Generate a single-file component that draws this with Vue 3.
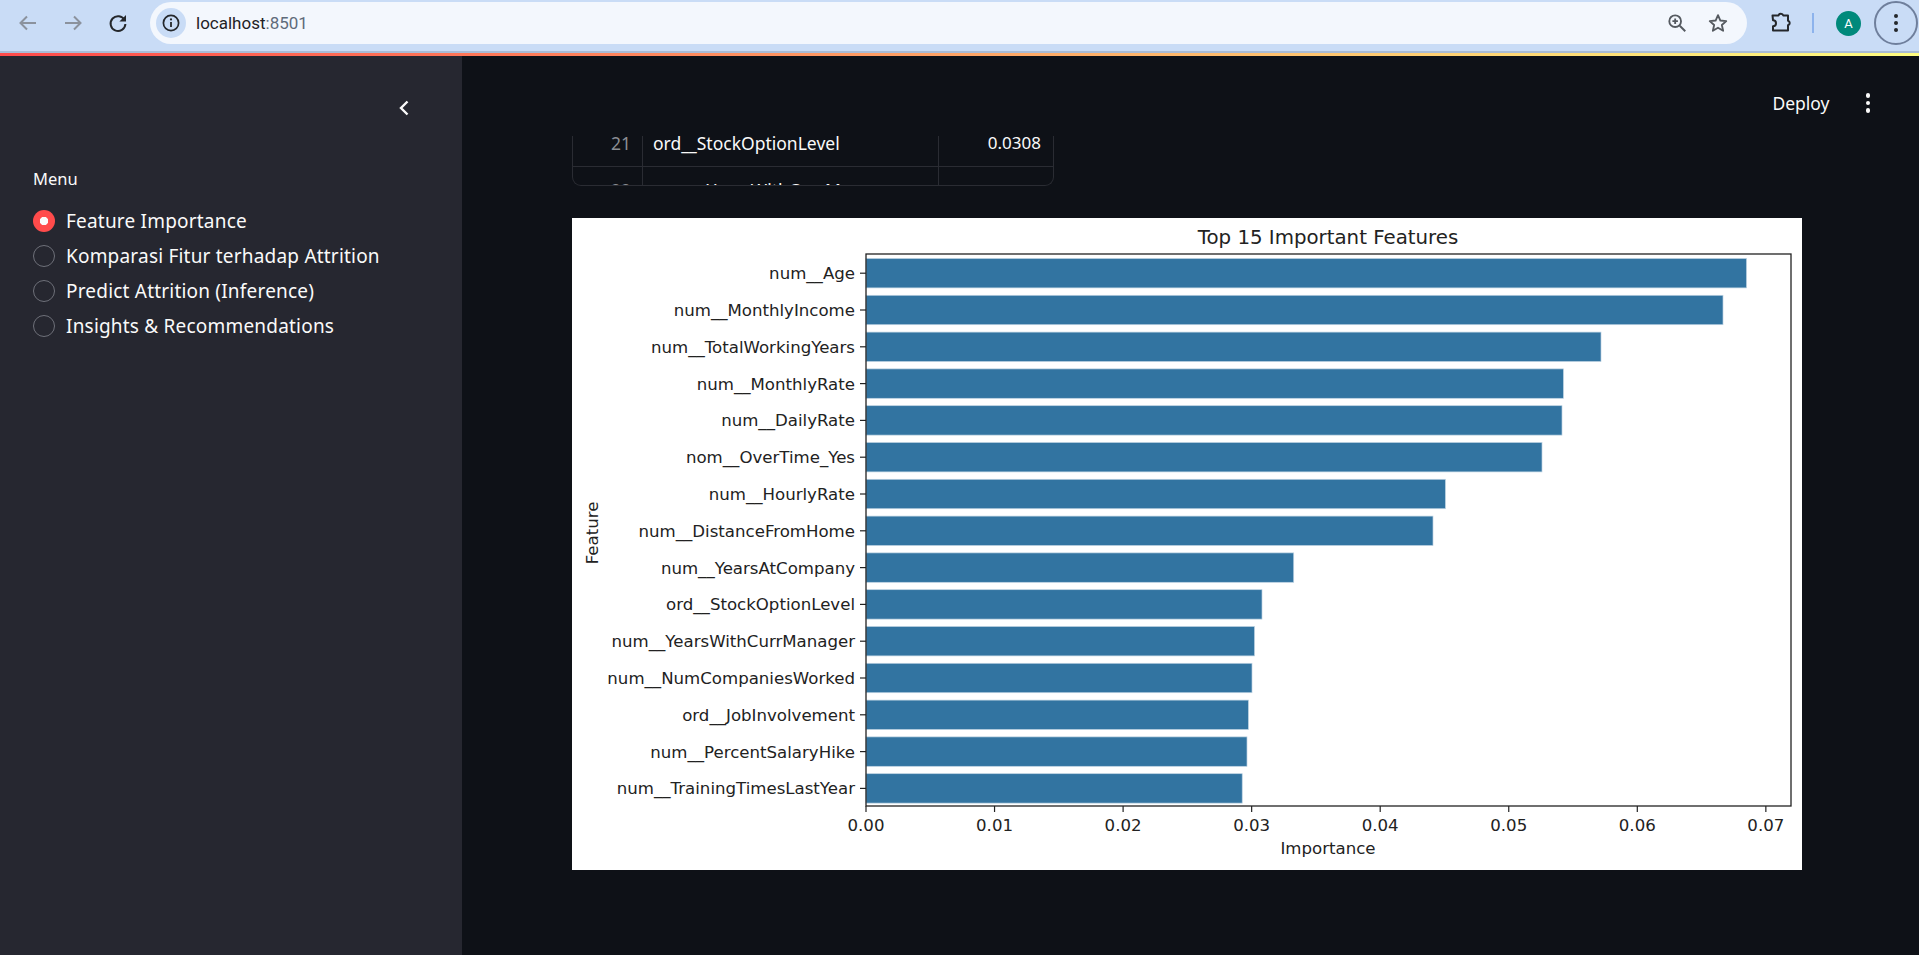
<script setup>
const radios = [
  { label: 'Feature Importance', on: true },
  { label: 'Komparasi Fitur terhadap Attrition', on: false },
  { label: 'Predict Attrition (Inference)', on: false },
  { label: 'Insights & Recommendations', on: false },
]
const rows = [
  { i: 21, f: 'ord__StockOptionLevel', v: '0.0308' },
  { i: 22, f: 'num__YearsWithCurrManager', v: '0.0302' },
]
const ox = 294
const oy = 36.8
const pitch = 36.8
const bars = [
  ['num__Age', 1746.5], ['num__MonthlyIncome', 1723], ['num__TotalWorkingYears', 1601],
  ['num__MonthlyRate', 1563.4], ['num__DailyRate', 1562], ['nom__OverTime_Yes', 1542],
  ['num__HourlyRate', 1445.4], ['num__DistanceFromHome', 1433], ['num__YearsAtCompany', 1293.7],
  ['ord__StockOptionLevel', 1262], ['num__YearsWithCurrManager', 1254.5], ['num__NumCompaniesWorked', 1252],
  ['ord__JobInvolvement', 1248.4], ['num__PercentSalaryHike', 1247], ['num__TrainingTimesLastYear', 1242.2],
].map(([name, end], n) => ({
  name,
  w: end - 866,
  cy: oy + pitch * (n + 0.5),
}))
const ticks = ['0.00', '0.01', '0.02', '0.03', '0.04', '0.05', '0.06', '0.07'].map((t, n) => ({ t, x: ox + 128.55 * n }))
</script>

<template>
  <div class="page">
    <header class="chrome">
      <div class="nav">
        <svg class="nav-ico" viewBox="0 0 24 24"><path d="M20 12H5M11 5.500 4.500 12l6.500 6.500" fill="none" stroke="#8b929d" stroke-width="2"/></svg>
        <svg class="nav-ico" viewBox="0 0 24 24"><path d="M4 12h15M13 5.500l6.500 6.500-6.500 6.500" fill="none" stroke="#8b929d" stroke-width="2"/></svg>
        <svg class="nav-ico" viewBox="0 0 24 24"><path d="M18.600 9.200A7.400 7.400 0 1 0 19.400 13" fill="none" stroke="#24272b" stroke-width="2"/><path d="M20 4v6.600h-6.600z" fill="#24272b"/></svg>
      </div>
      <div class="omni">
        <span class="chip">
          <svg width="20" height="20" viewBox="0 0 20 20"><circle cx="10" cy="10" r="7.600" fill="none" stroke="#24272b" stroke-width="1.700"/><path d="M10 9v5" stroke="#24272b" stroke-width="1.800"/><circle cx="10" cy="6.400" r="1.100" fill="#24272b"/></svg>
        </span>
        <span class="url">localhost<span class="port">:8501</span></span>
        <svg class="omni-ico" viewBox="0 0 24 24"><circle cx="10" cy="10" r="6.400" fill="none" stroke="#555a60" stroke-width="2"/><path d="M15 15l6 6" stroke="#555a60" stroke-width="2.200"/><path d="M10 7v6M7 10h6" stroke="#555a60" stroke-width="2"/></svg>
        <svg class="omni-ico star" viewBox="0 0 24 24"><path d="M12 3.400l2.600 5.900 6.400.6-4.800 4.300 1.400 6.300L12 17.200l-5.600 3.300 1.400-6.300L3 9.900l6.400-.6z" fill="none" stroke="#555a60" stroke-width="2" stroke-linejoin="round"/></svg>
      </div>
      <div class="tools">
        <svg class="puzzle" viewBox="0 0 24 24"><path d="M3.500 4.500h6a2.500 2.500 0 0 1 4.800 0h4.700v5.200a2.400 2.400 0 0 1 0 4.600v5.200H4v-4.300a3 3 0 0 0 0-6z" fill="none" stroke="#24272b" stroke-width="2" stroke-linejoin="round"/></svg>
        <span class="sep"></span>
        <span class="avatar">A</span>
        <span class="ring"><i></i><i></i><i></i></span>
      </div>
    </header>
    <div class="strip"></div>
    <div class="body">
      <aside class="side">
        <div class="collapse">
          <svg width="16" height="20" viewBox="0 0 16 20"><path d="M11.500 3.500 5 10l6.500 6.500" fill="none" stroke="#fafafa" stroke-width="2.400"/></svg>
        </div>
        <div class="menu-label">Menu</div>
        <div class="radio-list">
          <div v-for="r in radios" :key="r.label" class="radio">
            <span class="dot" :class="{ on: r.on }"></span>
            <span class="radio-text">{{ r.label }}</span>
          </div>
        </div>
      </aside>
      <main class="main">
        <div class="toolbar">
          <span class="deploy">Deploy</span>
          <span class="kebab"><i></i><i></i><i></i></span>
        </div>
        <div class="content">
          <div class="table">
            <div class="table-inner">
              <div v-for="r in rows" :key="r.i" class="row">
                <span class="idx">{{ r.i }}</span>
                <span class="feat">{{ r.f }}</span>
                <span class="val">{{ r.v }}</span>
              </div>
            </div>
          </div>
          <svg class="chart" width="1230" height="652" viewBox="0 0 1230 652">
            <rect width="1230" height="652" fill="#fff"/>
            <text class="title" x="756" y="26" text-anchor="middle">Top 15 Important Features</text>
            <g v-for="b in bars" :key="b.name">
              <rect class="bar" :x="ox" :y="b.cy - 14.7" :width="b.w" height="29.400"/>
              <line :x1="ox - 6" :x2="ox" :y1="b.cy" :y2="b.cy" stroke="#222" stroke-width="1.200"/>
              <text class="tick" :x="ox - 11" :y="b.cy + 6" text-anchor="end">{{ b.name }}</text>
            </g>
            <rect x="294" y="36" width="925" height="552" fill="none" stroke="#222" stroke-width="1.300"/>
            <g v-for="t in ticks" :key="t.t">
              <line :x1="t.x" :x2="t.x" y1="588" y2="594" stroke="#222" stroke-width="1.200"/>
              <text class="tick" :x="t.x" y="613" text-anchor="middle">{{ t.t }}</text>
            </g>
            <text class="tick" x="756" y="636" text-anchor="middle">Importance</text>
            <text class="tick" transform="translate(26 315) rotate(-90)" text-anchor="middle">Feature</text>
          </svg>
        </div>
      </main>
    </div>
  </div>
</template>

<style>
html, body { margin: 0; background: #0e1117; }
</style>

<style scoped>
.page { width: 1919px; height: 955px; display: flex; flex-direction: column; overflow: hidden; font-family: "Noto Sans", sans-serif; color: #fafafa; }
.chrome { height: 51px; background: #c9dcf6; border-bottom: 2px solid #a9bcd6; display: flex; align-items: flex-start; box-sizing: content-box; flex: none; }
.nav { width: 150px; display: flex; align-items: center; padding: 11px 0 0 16px; box-sizing: border-box; gap: 21px; }
.nav-ico { width: 24px; height: 24px; }
.omni { width: 1597px; height: 42px; margin-top: 2px; border-radius: 21px; background: #f3f7fd; display: flex; align-items: center; padding-left: 6px; box-sizing: border-box; }
.chip { width: 30px; height: 30px; border-radius: 50%; background: #c9dcf6; display: flex; align-items: center; justify-content: center; }
.url { margin-left: 10px; font-size: 17px; letter-spacing: 0; color: #1f2226; flex: 1; font-family: "Roboto", sans-serif; }
.port { color: #5f6b7a; }
.omni-ico { width: 22px; height: 22px; margin-right: 19px; }
.star { margin-right: 18px; }
.tools { flex: 1; display: flex; align-items: center; height: 46px; }
.puzzle { width: 24px; height: 24px; margin-left: 22px; }
.sep { width: 2px; height: 20px; background: #8db3ec; margin-left: 19px; }
.avatar { width: 25px; height: 25px; border-radius: 50%; background: #00897b; color: #fff; margin-left: 22px; font-size: 13px; display: flex; align-items: center; justify-content: center; font-family: "Roboto", sans-serif; }
.ring { width: 40px; height: 40px; margin-left: 13px; border: 2px solid #6f7f9c; border-radius: 50%; display: flex; flex-direction: column; align-items: center; justify-content: center; gap: 3px; }
.ring i { width: 4px; height: 4px; border-radius: 50%; background: #24272b; }
.strip { height: 3px; flex: none; background: linear-gradient(90deg, #ff4b4b, #fffd80); }
.body { flex: 1; display: flex; min-height: 0; }
.side { width: 462px; flex: none; background: #262730; padding: 40px 0 0 33px; box-sizing: border-box; }
.collapse { height: 24px; padding-left: 363px; display: flex; align-items: center; }
.menu-label { margin-top: 47px; font-size: 16.500px; line-height: 24px; }
.radio-list { margin-top: 18px; display: flex; flex-direction: column; gap: 11px; }
.radio { display: flex; align-items: center; height: 24px; gap: 11px; }
.dot { width: 22px; height: 22px; border-radius: 50%; border: 1.500px solid #6e7079; box-sizing: border-box; background: #262730; }
.dot.on { border: 0; background: radial-gradient(circle, #fafafa 0 4px, #ff4b4b 4.500px); }
.radio-text { font-size: 19px; letter-spacing: 0.200px; line-height: 24px; }
.main { flex: 1; background: #0e1117; display: flex; flex-direction: column; min-width: 0; }
.toolbar { height: 80px; flex: none; display: flex; align-items: flex-start; justify-content: flex-end; padding: 35px 49px 0 0; box-sizing: border-box; }
.deploy { font-size: 17.500px; line-height: 24px; }
.kebab { margin-left: 36px; height: 24px; display: flex; flex-direction: column; align-items: center; justify-content: center; gap: 3px; }
.kebab i { width: 4.500px; height: 4.500px; border-radius: 50%; background: #fafafa; }
.content { padding-left: 110px; display: flex; flex-direction: column; }
.table { width: 482px; height: 50px; box-sizing: border-box; overflow: hidden; border: 1px solid #2a2c33; border-top: 0; border-radius: 0 0 9px 9px; }
.table-inner { margin-top: -15px; }
.row { height: 46px; display: grid; grid-template-columns: 70px 296px 1fr; border-bottom: 1px solid #2a2c33; box-sizing: border-box; font-size: 17.500px; line-height: 44px; }
.row + .row { line-height: 47px; }
.idx { text-align: right; padding-right: 11px; color: #8a8d93; border-right: 1px solid #2a2c33; }
.feat { padding-left: 10px; border-right: 1px solid #2a2c33; }
.val { text-align: right; padding-right: 12px; font-size: 17px; }
.chart { display: block; margin-top: 32px; }
.bar { fill: #3274a1; stroke: #bcd2e2; stroke-width: 0.700; }
.tick { font-family: "DejaVu Sans", sans-serif; font-size: 16.600px; fill: #222; }
.title { font-family: "DejaVu Sans", sans-serif; font-size: 19.800px; fill: #222; }
</style>
